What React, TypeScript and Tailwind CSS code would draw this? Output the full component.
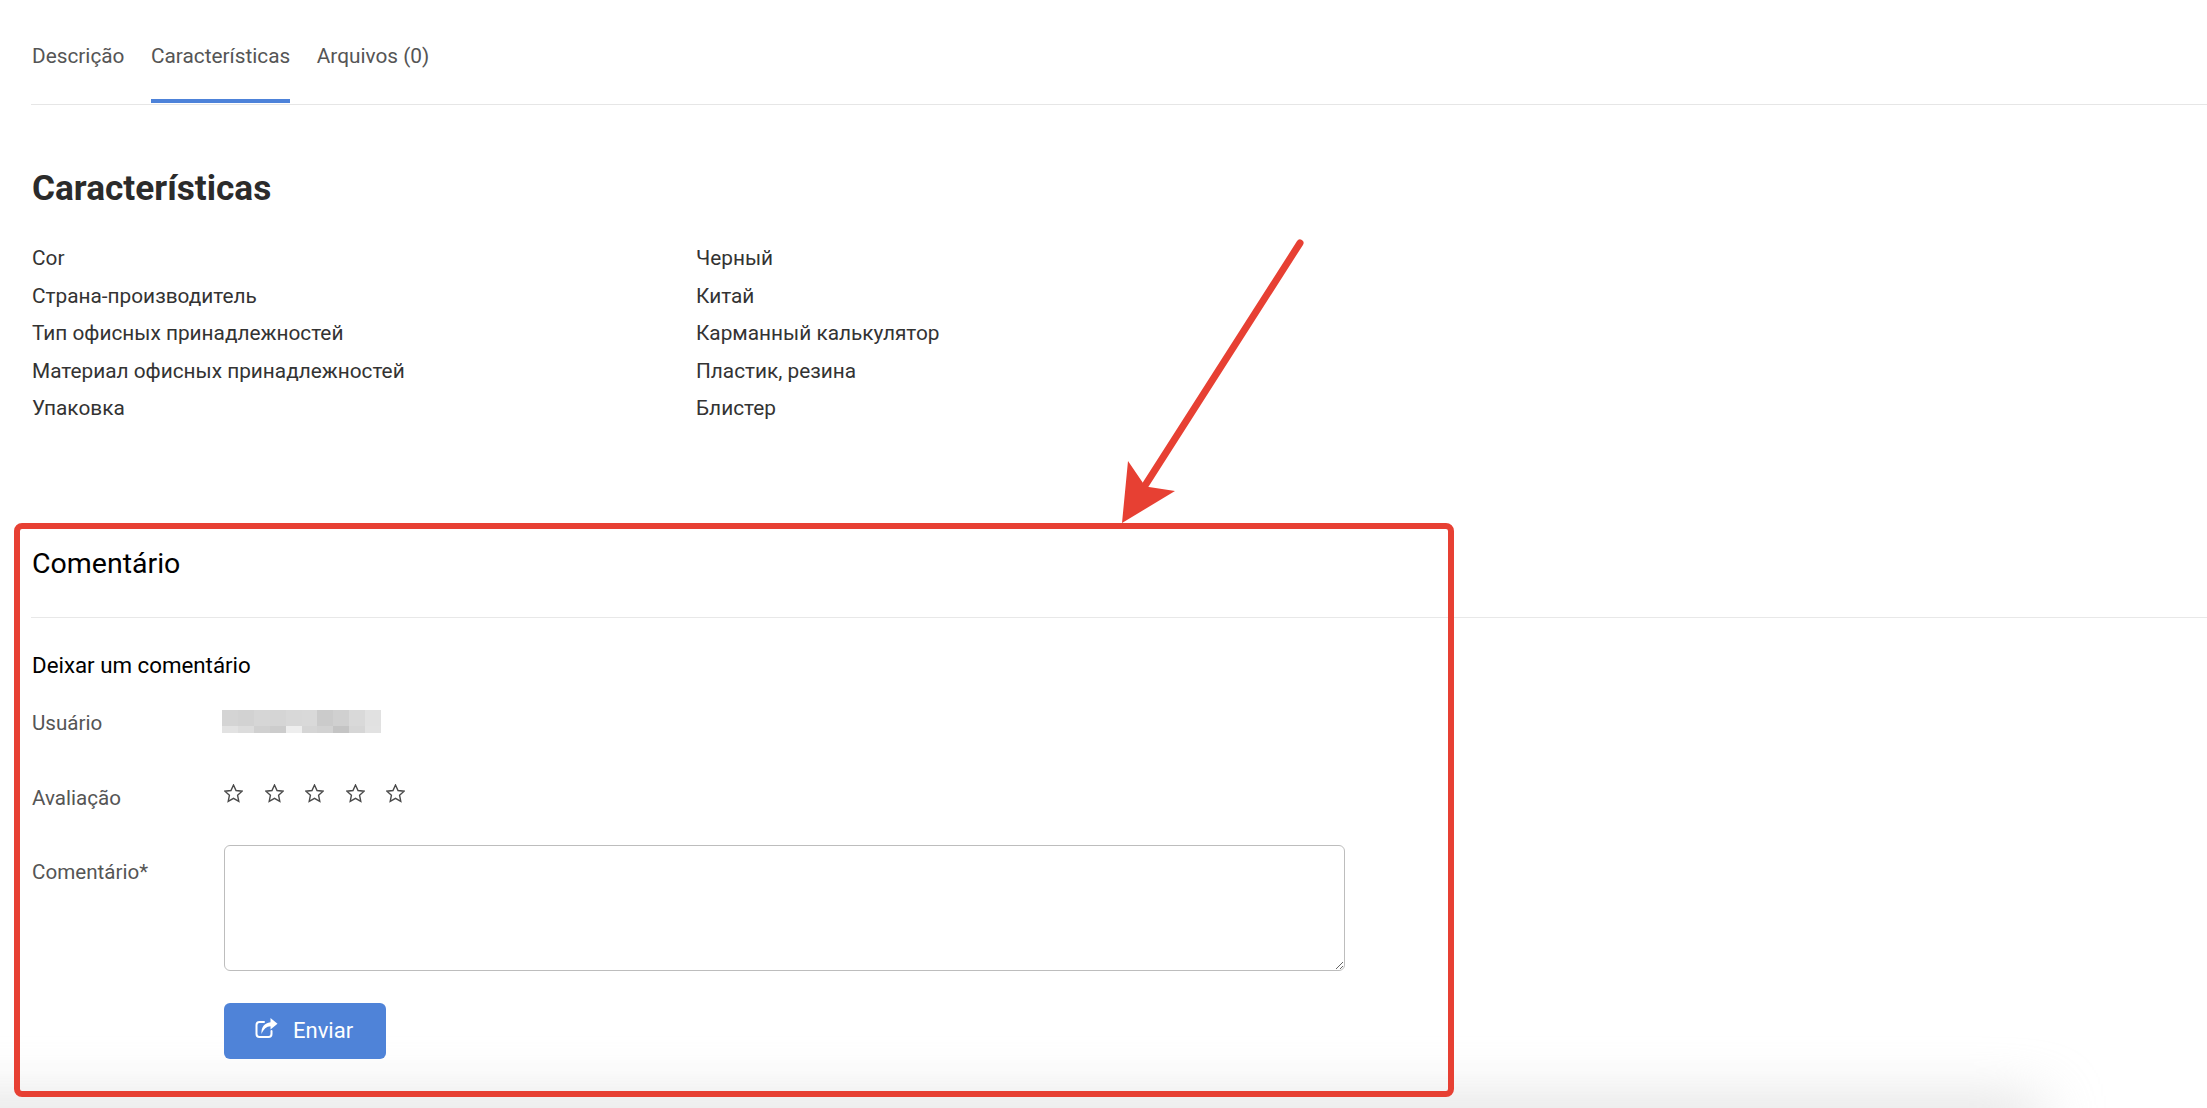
const specs: [string, string][] = [
  ["Cor", "Черный"],
  ["Страна-производитель", "Китай"],
  ["Тип офисных принадлежностей", "Карманный калькулятор"],
  ["Материал офисных принадлежностей", "Пластик, резина"],
  ["Упаковка", "Блистер"],
];

const topCells = ["bg-[#d4d4d4]", "bg-[#d2d2d2]", "bg-[#d6d6d6]", "bg-[#d5d5d5]", "bg-[#d8d8d8]", "bg-[#d9d9d9]", "bg-[#cbcbcb]", "bg-[#d0d0d0]", "bg-[#d9d9d9]", "bg-[#e1e1e1]"];
const bottomCells = ["bg-[#e2e2e2]", "bg-[#dcdcdc]", "bg-[#d0d0d0]", "bg-[#cccccc]", "bg-[#eeeeee]", "bg-[#d5d5d5]", "bg-[#d2d2d2]", "bg-[#c4c4c4]", "bg-[#d6d6d6]", "bg-[#e2e2e2]"];

function StarIcon() {
  return (
    <svg width="19" height="19" viewBox="0 0 19 19" fill="none" className="shrink-0">
      <polygon
        points="9.5,1 12.03,6.52 18.06,7.22 13.59,11.33 14.79,17.28 9.5,14.3 4.21,17.28 5.41,11.33 0.94,7.22 6.97,6.52"
        stroke="#4a4a4a"
        strokeWidth="1.4"
      />
    </svg>
  );
}

function ShareIcon() {
  return (
    <svg width="24" height="22" viewBox="0 0 24 22" fill="none" className="mb-[6px] shrink-0">
      <path d="M9 5H4.5a3 3 0 0 0-3 3v9a3 3 0 0 0 3 3h9a3 3 0 0 0 3-3v-3" stroke="white" strokeWidth="2" strokeLinecap="round" />
      <path d="M6.5 17C6 10 9.5 6 15.5 5.2V1L22.5 6.8 15.5 12.6V9.2C11.5 9.2 8.5 12 6.5 17Z" fill="white" />
    </svg>
  );
}

export default function App() {
  return (
    <div className="relative h-[1108px] w-[2207px] overflow-hidden bg-white font-['Roboto',sans-serif]">
      {/* soft shadow along the bottom edge */}
      <div className="absolute left-[-200px] top-[1108px] h-[26px] w-[2240px] bg-[#c8c8c8] blur-[30px]" />

      <div className="relative pl-[31px]">
        <div className="flex h-[105px] gap-[26.5px] border-b border-[#e6e6e6] pl-px">
          <div className="h-[103px] pt-[41px] text-[20.8px] leading-[30px] text-[#555555]">Descrição</div>
          <div className="h-[103px] border-b-4 border-[#4d82d9] pt-[41px] text-[20.8px] leading-[30px] text-[#555555]">Características</div>
          <div className="h-[103px] pt-[41px] text-[20.8px] leading-[30px] text-[#555555]">Arquivos (0)</div>
        </div>

        <div className="pl-px">
          <h2 className="mt-[59px] text-[35.2px] font-bold leading-[48px] text-[#2b2b2b]">Características</h2>
          <div className="mt-[28px] grid grid-cols-[664px_1fr] text-[20.8px] leading-[37.5px] text-[#333333]">
            {specs.map(([k, v]) => (
              <div key={k} className="contents">
                <div>{k}</div>
                <div>{v}</div>
              </div>
            ))}
          </div>
          <h3 className="mt-[116px] text-[28.5px] leading-[40px] text-black">Comentário</h3>
        </div>

        <div className="mt-[33px] h-px bg-[#e8e8e8]" />

        <div className="pl-px">
          <h4 className="mt-[32px] text-[22.3px] leading-[30px] text-black">Deixar um comentário</h4>

          <div className="mt-[28px] flex h-[30px] text-[20.6px] leading-[30px] text-[#555555]">
            <div className="w-[190px]">Usuário</div>
            <div className="mt-[2px] flex h-[23px] w-[159px] flex-col">
              <div className="flex h-[16px]">
                {topCells.map((c, i) => (
                  <div key={i} className={`flex-1 ${c}`} />
                ))}
              </div>
              <div className="flex h-[7px]">
                {bottomCells.map((c, i) => (
                  <div key={i} className={`flex-1 ${c}`} />
                ))}
              </div>
            </div>
          </div>

          <div className="mt-[45px] flex h-[30px] text-[20.6px] leading-[30px] text-[#555555]">
            <div className="w-[192px]">Avaliação</div>
            <div className="mt-[1px] flex h-[19px] gap-[21.5px]">
              {[0, 1, 2, 3, 4].map((i) => (
                <StarIcon key={i} />
              ))}
            </div>
          </div>

          <div className="mt-[33px] flex text-[20.6px] leading-[30px] text-[#555555]">
            <div className="w-[192px] pt-[11px]">Comentário*</div>
            <textarea className="mt-[-1px] h-[126px] w-[1121px] rounded-[6px] border border-[#bdbdbd] bg-white outline-none" />
          </div>

          <button className="ml-[192px] mt-[32px] flex h-[56px] w-[162px] items-center rounded-[6px] bg-[#4f83d8] pl-[31px] text-[22px] text-white">
            <ShareIcon />
            <span className="ml-[14px]">Enviar</span>
          </button>
        </div>
      </div>

      {/* annotation: red frame and arrow */}
      <div className="absolute left-[14px] top-[523px] h-[574px] w-[1440px] rounded-[8px] border-[6px] border-[#e74033]" />
      <svg className="absolute left-0 top-0" width="2207" height="1108" viewBox="0 0 2207 1108" fill="none">
        <line x1="1300" y1="243" x2="1146" y2="484" stroke="#e74033" strokeWidth="7" strokeLinecap="round" />
        <polygon points="1122,523 1128,461 1143,483 1149,487 1175,491" fill="#e74033" />
      </svg>
    </div>
  );
}
